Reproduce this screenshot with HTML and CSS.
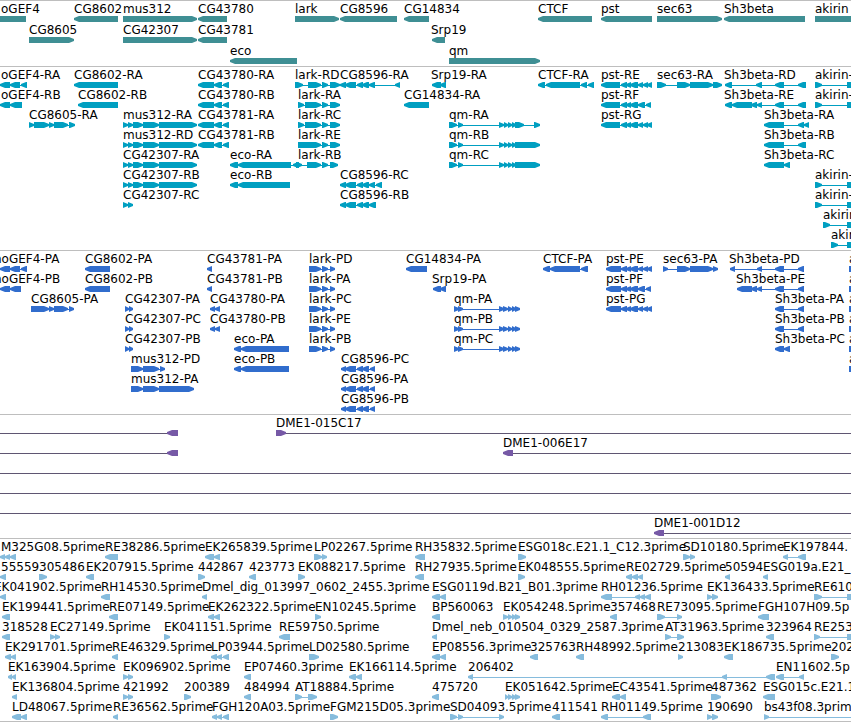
FILE: index.html
```
<!DOCTYPE html>
<html lang="en">
	<head>
		<meta charset="UTF-8" />
		<title>Genome tracks</title>
		<link rel="stylesheet" href="styles.css">
	</head>
	<body>
		<main id="browser">
			<section class="track gene" data-track="gene" aria-label="Genes"></section>
			<section class="track transcript" data-track="transcript" aria-label="Transcripts"></section>
			<section class="track protein" data-track="protein" aria-label="Proteins"></section>
			<section class="track clone" data-track="clone" aria-label="Clones"></section>
			<section class="track est" data-track="est" aria-label="ESTs"></section>
		</main>
		<script src="tracks.js"></script>
	</body>
</html>
```
FILE: styles.css
```
* {
	margin: 0;
	padding: 0;
}

body {
	background-color: #fff;
	color: #000;
	font-family: "DejaVu Sans", sans-serif;
	font-size: 12px;
	line-height: 16px;
	overflow: hidden;
}

.track {
	border-top: 1px solid #bebebe;
	padding-bottom: 3px;
	overflow: hidden;
}

.row {
	position: relative;
	height: 20px;
}

.gene {
	color: #3f8f94;
	padding-bottom: 2px;
}

.gene .row {
	height: 21px;
}

.transcript {
	color: #009fc1;
}

.protein {
	color: #316dcd;
}

.clone {
	color: #7659a6;
}

.est {
	color: #86bcdd;
	padding-bottom: 2px;
	border-bottom: 1px solid #bebebe;
}

/* features sit at their own place on the sequence */
.label {
	position: absolute;
	top: 0;
	color: #000;
	white-space: nowrap;
}

.glyphs {
	display: block;
	position: absolute;
	left: 0;
	top: 15px;
	width: 100%;
	height: 6px;
	fill: currentColor;
}

.clone .intron {
	fill: #5f5672;
}
```
FILE: tracks.js
```
// feature: [label, label x, strand, [start, end, start, end, ...]]
var F = 1, R = -1;
var END = 4000; // runs on past the visible region

var cg43780 = [198, 214, 214, 222, 223, 229];
var mus312 = [123, 128, 128, 133, 133, 143, 143, 159, 159, 197];
var larkEnd = [322, 328, 330, 340];
var larkA = [298, 304, 305, 321].concat(larkEnd);
var larkP = [309, 321, 322, 328, 330, 335];
var pst = [621, 627, 626, 631, 630, 638, 638, 643, 643, 648, 647, 652];
var pstF = [621, 627, 626, 631, 630, 638, 638, 645, 646, 651];
var cg8596 = [340, 346, 345, 356, 357, 363, 362, 369];
var cg8596P = [341, 346, 345, 356, 357, 363, 362, 369, 370, 375];
var qm = [449, 457, 458, 463, 499, 504, 504, 508, 508, 512, 512, 516];
var qmP = [454, 459, 458, 463, 499, 504, 503, 508, 508, 512, 512, 516, 515, 520];
var akirin = ['akirin-', 815, F, [815, 822, 847, 856]];
var akirinP = ['akirin-', 849, F, [849, 856]];

var tracks = {
	gene: [
		[
			['oGEF4', 1, F, [-10, 26]], ['CG8602', 74, R, [74, 118]], ['mus312', 123, F, [123, 197]],
			['CG43780', 198, R, [198, 227]], ['lark', 295, F, [295, 339]], ['CG8596', 340, R, [340, 397]],
			['CG14834', 404, R, [404, 429]], ['CTCF', 538, R, [538, 592]], ['pst', 601, R, [601, 652]],
			['sec63', 657, F, [657, 722]], ['Sh3beta', 724, R, [724, 805]], ['akirin', 815, F, [815, 870]]
		],
		[
			['CG8605', 29, F, [29, 74]], ['CG42307', 123, F, [123, 197]], ['CG43781', 198, R, [198, 227]],
			['Srp19', 431, R, [432, 445]]
		],
		[
			['eco', 230, R, [230, 297]], ['qm', 449, F, [449, 540]]
		]
	],
	transcript: [
		[
			['oGEF4-RA', 1, R, [0, 10, 10, 20, 21, 27]], ['CG8602-RA', 74, R, [74, 118]], ['CG43780-RA', 198, R, cg43780],
			['lark-RD', 295, F, [295, 303, 308, 321].concat(larkEnd)], ['CG8596-RA', 340, R, cg8596.concat([369, 375, 395, 400])],
			['Srp19-RA', 431, R, [432, 441, 440, 446]], ['CTCF-RA', 538, R, [538, 545, 546, 580, 581, 587, 588, 594]],
			['pst-RE', 601, R, [601, 620].concat(pst)], ['sec63-RA', 657, F, [657, 666, 677, 690, 690, 713, 713, 722]],
			['Sh3beta-RD', 724, R, [725, 732, 756, 762, 775, 784, 798, 806]], akirin
		],
		[
			['oGEF4-RB', 1, R, [0, 10, 10, 22]], ['CG8602-RB', 78, R, [78, 118]], ['CG43780-RB', 198, R, cg43780],
			['lark-RA', 298, F, larkA], ['CG14834-RA', 404, R, [404, 429]], ['pst-RF', 601, R, [601, 620].concat(pstF)],
			['Sh3beta-RE', 724, R, [725, 732, 732, 752, 751, 757, 757, 762, 775, 784, 798, 806]], akirin
		],
		[
			['CG8605-RA', 29, F, [29, 34, 34, 49, 49, 54, 54, 68, 69, 75]], ['mus312-RA', 123, F, mus312],
			['CG43781-RA', 198, R, cg43780], ['lark-RC', 298, F, larkA], ['qm-RA', 449, F, qm.concat([515, 524, 534, 540])],
			['pst-RG', 601, R, [601, 620].concat(pst)], ['Sh3beta-RA', 764, R, [764, 784, 798, 804, 804, 809]]
		],
		[
			['mus312-RD', 123, F, mus312], ['CG43781-RB', 198, R, cg43780], ['lark-RE', 298, F, [298, 321].concat(larkEnd)],
			['qm-RB', 449, F, qm.concat([515, 540])], ['Sh3beta-RB', 764, R, [764, 784, 798, 806]]
		],
		[
			['CG42307-RA', 123, F, mus312], ['eco-RA', 230, R, [230, 238, 238, 291, 293, 299]],
			['lark-RB', 298, F, [296, 302, 307, 321, 322, 328, 330, 338]], ['qm-RC', 449, F, qm.concat([515, 540])],
			['Sh3beta-RC', 764, R, [764, 784, 784, 790]]
		],
		[
			['CG42307-RB', 123, F, mus312], ['eco-RB', 230, R, [230, 238, 238, 290]],
			['CG8596-RC', 340, R, cg8596.concat([369, 375, 376, 382])], akirin
		],
		[
			['CG42307-RC', 123, F, [123, 128, 128, 133]], ['CG8596-RB', 340, R, cg8596.concat([369, 376])], akirin
		],
		[
			['akirin-', 823, F, [823, 830, 847, 856]]
		],
		[
			['akirin-', 831, F, [831, 838, 847, 856]]
		]
	],
	protein: [
		[
			['hoGEF4-PA', -6, R, [0, 10, 10, 20, 21, 27]], ['CG8602-PA', 85, R, [85, 110]], ['CG43781-PA', 207, R, [207, 212]],
			['lark-PD', 309, F, larkP], ['CG14834-PA', 406, R, [406, 427]], ['CTCF-PA', 543, R, [543, 550, 550, 580, 581, 588]],
			['pst-PE', 606, R, [606, 621].concat(pst)], ['sec63-PA', 663, F, [663, 668, 677, 690, 690, 713, 713, 718]],
			['Sh3beta-PD', 729, R, [730, 735, 757, 762, 775, 784, 798, 804]], akirinP
		],
		[
			['hoGEF4-PB', -6, R, [0, 10, 10, 21]], ['CG8602-PB', 85, R, [85, 110]], ['CG43781-PB', 207, R, [207, 212]],
			['lark-PA', 309, F, larkP], ['Srp19-PA', 432, R, [433, 441, 440, 446]], ['pst-PF', 606, R, [606, 621].concat(pstF)],
			['Sh3beta-PE', 736, R, [737, 752, 751, 757, 757, 762, 775, 784, 798, 804]], akirinP
		],
		[
			['CG8605-PA', 31, F, [31, 49, 49, 54, 54, 68, 69, 74]], ['CG42307-PA', 125, F, [125, 129, 129, 133]],
			['CG43780-PA', 210, R, [210, 215, 215, 220]], ['lark-PC', 309, F, larkP], ['qm-PA', 454, F, qmP],
			['pst-PG', 606, R, [606, 621].concat(pst)], ['Sh3beta-PA', 775, R, [775, 784, 798, 804]], akirinP
		],
		[
			['CG42307-PC', 125, F, [125, 129, 129, 133]], ['CG43780-PB', 210, R, [210, 215, 215, 220]],
			['lark-PE', 309, F, larkP], ['qm-PB', 454, F, qmP], ['Sh3beta-PB', 775, R, [775, 784, 798, 804]], akirinP
		],
		[
			['CG42307-PB', 125, F, [125, 129, 129, 133]], ['eco-PA', 234, R, [234, 241, 241, 289]],
			['lark-PB', 309, F, larkP], ['qm-PC', 454, F, qmP], ['Sh3beta-PC', 775, R, [775, 784, 784, 790]], akirinP
		],
		[
			['mus312-PD', 131, F, [131, 143, 143, 159, 160, 165]], ['eco-PB', 234, R, [234, 241, 241, 289]],
			['CG8596-PC', 341, R, cg8596P], akirinP
		],
		[
			['mus312-PA', 131, F, [131, 143, 143, 159, 159, 194]], ['CG8596-PA', 341, R, cg8596P]
		],
		[
			['CG8596-PB', 341, R, cg8596P]
		]
	],
	clone: [
		[
			['', 0, R, [-20, -10, 167, 178]], ['DME1-015C17', 276, F, [276, 286, END, END]]
		],
		[
			['', 0, R, [-20, -10, 167, 178]], ['DME1-006E17', 503, R, [503, 513, END, END]]
		],
		[['', 0, F, [-20, -10, END, END]]],
		[['', 0, F, [-20, -10, END, END]]],
		[['', 0, F, [-20, -10, END, END]]],
		[['DME1-001D12', 654, R, [654, 664, END, END]]]
	],
	est: [
		[
			['M325G08.5prime', 1, R, [0, 5, 5, 10, 10, 16]], ['RE38286.5prime', 105, R, [105, 118]],
			['EK265839.5prime', 205, R, [205, 214, 214, 220]], ['LP02267.5prime', 314, F, [314, 322, 322, 327]],
			['RH35832.5prime', 415, R, [415, 425]], ['ESG018c.E21.1_C12.3prime', 518, F, [518, 526]],
			['SD10180.5prime', 683, F, [683, 690, 690, 695]], ['EK197844.', 783, R, [783, 788, 798, 806]]
		],
		[
			['55559', 1, R, [0, 6]], ['305486', 39, F, [39, 47]], ['EK207915.5prime', 86, R, [86, 94]],
			['442867', 198, F, [198, 205]], ['423773', 249, R, [249, 256]], ['EK088217.5prime', 298, F, [298, 305]],
			['RH27935.5prime', 415, R, [415, 424]], ['EK048555.5prime', 518, F, [518, 525]],
			['RE02729.5prime', 626, R, [626, 632, 632, 638, 638, 643]], ['50594', 725, R, [725, 730]],
			['ESG019a.E21_B', 763, R, [763, 768]]
		],
		[
			['EK041902.5prime', -6, R, [0, 6]], ['RH14530.5prime', 101, R, [101, 110]],
			['Dmel_dig_013997_0602_2455.3prime', 202, R, [202, 207]], ['ESG0119d.B21_B01.3prime', 432, R, [432, 440, 440, 446]],
			['RH01236.5prime', 601, R, [601, 612, 635, 640, 640, 645, 645, 651]], ['EK136433.5prime', 707, F, [707, 712, 712, 718]],
			['RE610', 814, F, [814, 822, 847, 856]]
		],
		[
			['EK199441.5prime', 2, R, [2, 10]], ['RE07149.5prime', 109, R, [109, 118]],
			['EK262322.5prime', 208, R, [208, 214, 214, 220]], ['EN10245.5prime', 315, F, [315, 321]],
			['BP560063', 432, R, [432, 440]], ['EK054248.5prime', 503, F, [503, 508, 508, 512, 512, 516, 515, 520]],
			['357468', 610, R, [610, 617]], ['RE73095.5prime', 657, F, [657, 665, 677, 682]],
			['FGH107H09.5p', 758, R, [758, 769]]
		],
		[
			['318528', 2, R, [2, 10]], ['EC27149.5prime', 50, F, [50, 55, 55, 60]], ['EK041151.5prime', 164, F, [164, 170]],
			['RE59750.5prime', 279, R, [279, 290]], ['Dmel_neb_010504_0329_2587.3prime', 432, R, [432, 437]],
			['AT31963.5prime', 665, F, [665, 671, 677, 684]], ['323964', 766, R, [766, 774]],
			['RE253', 814, F, [814, 820, 847, 856]]
		],
		[
			['EK291701.5prime', 5, R, [5, 11, 11, 16]], ['RE46329.5prime', 112, R, [112, 118]],
			['LP03944.5prime', 211, R, [211, 217, 217, 222, 223, 229]], ['LD02580.5prime', 309, F, [309, 319]],
			['EP08556.3prime', 432, R, [432, 440, 440, 446]], ['325763', 530, R, [530, 538]],
			['RH48992.5prime', 576, R, [576, 584]], ['213083', 678, F, [678, 683]],
			['EK186735.5prime', 724, R, [724, 733]], ['202', 831, F, [831, 839]]
		],
		[
			['EK163904.5prime', 8, R, [8, 12, 12, 16]], ['EK096902.5prime', 123, F, [123, 128, 128, 133]],
			['EP07460.3prime', 244, R, [244, 251]], ['EK166114.5prime', 349, R, [349, 356, 356, 362]],
			['206402', 468, R, [468, 473, 722, 727, 766, 775]], ['EN11602.5p', 776, R, [776, 784, 799, 804]]
		],
		[
			['EK136804.5prime', 12, R, [12, 17]], ['421992', 123, F, [123, 128, 128, 133]], ['200389', 184, F, [184, 191]],
			['484994', 244, R, [244, 251]], ['AT18884.5prime', 295, F, [295, 302, 308, 317]], ['475720', 432, R, [432, 439]],
			['EK051642.5prime', 505, F, [505, 508, 508, 512, 512, 516, 515, 520]], ['EC43541.5prime', 612, R, [612, 620, 620, 626]],
			['487362', 711, F, [711, 721]], ['ESG015c.E21.1', 763, R, [763, 775]]
		],
		[
			['LD48067.5prime', 12, R, [12, 21, 21, 27]], ['RE36562.5prime', 113, R, [113, 118]],
			['FGH120A03.5prime', 212, R, [212, 217, 217, 222, 223, 229]], ['FGM215D05.3prime', 330, F, [330, 338]],
			['SD04093.5prime', 450, F, [450, 457, 458, 463, 499, 504]], ['411541', 552, R, [552, 560]],
			['RH01149.5prime', 601, R, [601, 608, 643, 651]], ['190690', 707, F, [707, 712, 712, 718]],
			['bs43f08.3prime', 764, F, [764, 769, END, END]]
		]
	]
};

// the first gene ends in a flat edge
tracks.gene[0][0][2] = R;

var NS = 'http://www.w3.org/2000/svg';

function addShape(svg, cls, points) {
	var shape = document.createElementNS(NS, 'polygon');
	shape.setAttribute('class', cls);
	shape.setAttribute('points', points.join(' '));
	svg.appendChild(shape);
}

function drawFeature(svg, strand, exons) {
	var first = exons[0];
	var last = exons[exons.length - 1];
	if (exons.length > 2) {
		addShape(svg, 'intron', [first, 3, last, 3, last, 4, first, 4]);
	}
	for (let i = 0; i < exons.length; i += 2) {
		let a = exons[i], b = exons[i + 1];
		let head = Math.min(b - a, 5);
		if (strand === F) {
			addShape(svg, 'exon', [a, 0, b - head, 0, b - head / 2, 1, b, 2, b, 4, b - head / 2, 5, b - head, 6, a, 6]);
		} else {
			addShape(svg, 'exon', [b, 0, a + head, 0, a + head / 2, 1, a, 2, a, 4, a + head / 2, 5, a + head, 6, b, 6]);
		}
	}
}

document.querySelectorAll('.track').forEach(function(track) {
	tracks[track.dataset.track].forEach(function(features) {
		var row = document.createElement('div');
		var svg = document.createElementNS(NS, 'svg');
		row.className = 'row';
		svg.setAttribute('class', 'glyphs');
		svg.setAttribute('aria-hidden', 'true');
		row.appendChild(svg);
		features.forEach(function(f) {
			drawFeature(svg, f[2], f[3]);
			if (f[0]) {
				let label = document.createElement('span');
				label.className = 'label';
				label.textContent = f[0];
				label.style.left = f[1] + 'px';
				row.appendChild(label);
			}
		});
		track.appendChild(row);
	});
});
```
